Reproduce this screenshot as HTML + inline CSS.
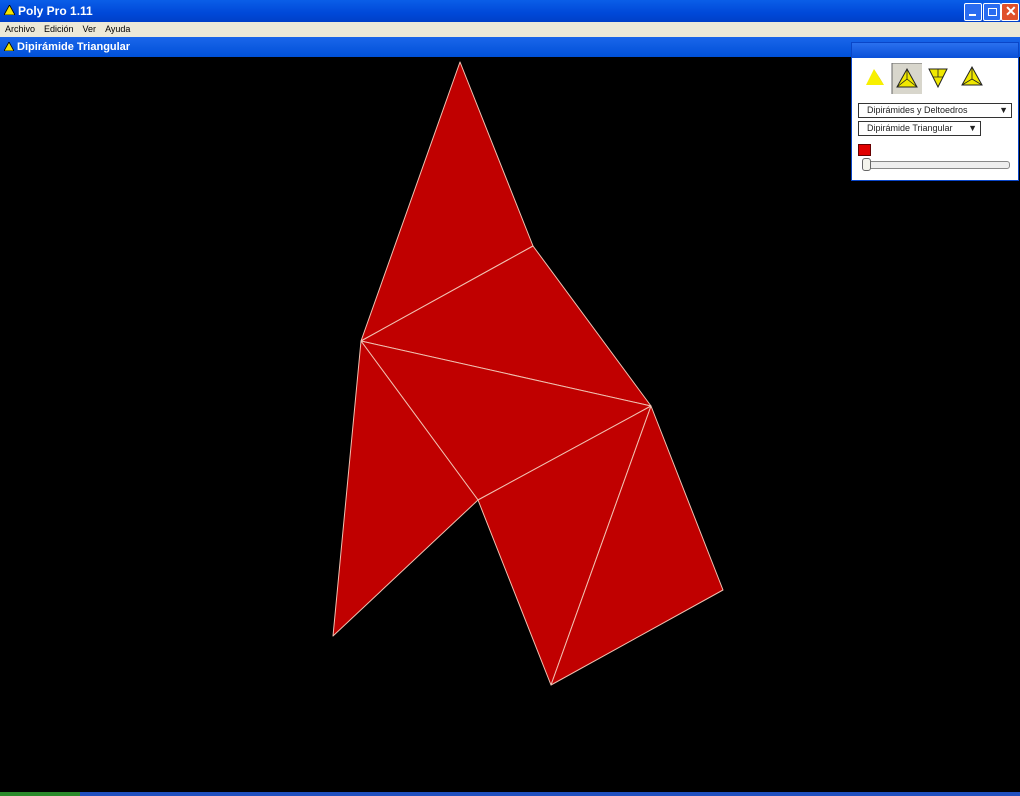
<!DOCTYPE html><html><head><style>
body{margin:0;width:1020px;height:796px;overflow:hidden;background:#000;font-family:"Liberation Sans",sans-serif;position:relative}
.tb{position:absolute;left:0;top:0;width:1020px;height:22px;background:linear-gradient(#0a5ee8,#0048d8 60%,#0040c8);color:#fff;font-weight:bold;font-size:12px}
.menu{position:absolute;left:0;top:22px;width:1020px;height:15px;background:#ece9d8;font-size:9px;color:#000}
.menu span{display:inline-block;margin-left:5px;margin-right:4px;line-height:15px}
.tb2{position:absolute;left:0;top:37px;width:1020px;height:20px;background:linear-gradient(#1a66ea,#0050d8);color:#fff;font-weight:bold;font-size:11px}
.btn{position:absolute;top:3px;width:16px;height:16px;border:1px solid #fff;border-radius:2px;background:#2a6cf0}
.panel{position:absolute;left:851px;top:42px;width:166px;height:137px;background:linear-gradient(#2a70ee,#0a50d8) top/100% 15px no-repeat,#fff;border:1px solid #0a46c8}
.sel{position:absolute;background:#fff;border:1px solid #333;font-size:9px;color:#222;line-height:13px;padding-left:8px;box-sizing:border-box}
</style></head><body>
<div class="tb"><svg style="position:absolute;left:4px;top:5px" width="11" height="10"><polygon points="5.5,0 11,10 0,10" fill="#f4e400" stroke="#000" stroke-width=".8"/></svg><span style="position:absolute;left:18px;top:4px">Poly Pro 1.11</span>
<div class="btn" style="left:964px"><div style="position:absolute;left:4px;top:10px;width:7px;height:2px;background:#fff"></div></div>
<div class="btn" style="left:983px"><div style="position:absolute;left:4px;top:4px;width:7px;height:6px;border:1px solid #fff"></div></div>
<div class="btn" style="left:1001px;background:#e0502a"><span style="position:absolute;left:3px;top:-1px;font-size:14px">✕</span></div></div>
<div class="menu"><span>Archivo</span><span>Edición</span><span>Ver</span><span>Ayuda</span></div>
<div class="tb2"><svg style="position:absolute;left:4px;top:5px" width="10" height="9"><polygon points="5,0 10,9 0,9" fill="#f4e400" stroke="#000" stroke-width=".8"/></svg><span style="position:absolute;left:17px;top:4px">Dipirámide Triangular</span></div>
<svg style="position:absolute;left:0;top:0" width="1020" height="796">
<g fill="#c00000" stroke="#f0c0b0" stroke-width="1" stroke-linejoin="round">
<polygon points="460,62 533,246 361,341"/>
<polygon points="361,341 533,246 651,406"/>
<polygon points="361,341 651,406 478,500"/>
<polygon points="361,341 478,500 333,636"/>
<polygon points="478,500 651,406 551,685"/>
<polygon points="651,406 723,590 551,685"/>
</g>
<rect x="0" y="792" width="80" height="4" fill="#2a8a2a"/><rect x="80" y="792" width="940" height="4" fill="#2050c0"/>
</svg>
<div class="panel">
<svg style="position:absolute;left:8px;top:20px" width="150" height="32">
<rect x="32" y="0" width="30" height="31" fill="#d8d6cc"/><path d="M32,31V0H62" stroke="#666" fill="none"/>
<polygon points="14,6 24,22 6,22" fill="#f8f000"/><polygon points="14,6 24,22 20,16" fill="#a8a000"/>
<polygon points="47,6 57,24 37,24" fill="#f0e800" stroke="#222"/><path d="M47,6L47,16 37,24M47,16 57,24" stroke="#222" fill="none" stroke-width=".8"/>
<polygon points="69,6 87,6 78,24" fill="#f0e800" stroke="#222"/><path d="M73,14h10M78,6v8" stroke="#222" stroke-width=".8"/>
<polygon points="112,4 122,22 102,22" fill="#f0e800" stroke="#222"/><path d="M112,4v12L102,22M112,16l10,6" stroke="#222" stroke-width=".8" fill="none"/>
</svg>
<div class="sel" style="left:6px;top:60px;width:154px;height:15px">Dipirámides y Deltoedros<span style="position:absolute;right:3px">▼</span></div>
<div class="sel" style="left:6px;top:78px;width:123px;height:15px">Dipirámide Triangular<span style="position:absolute;right:3px">▼</span></div>
<div style="position:absolute;left:6px;top:101px;width:11px;height:10px;background:#e00000;border:1px solid #600"></div>
<div style="position:absolute;left:10px;top:118px;width:146px;height:6px;border:1px solid #888;border-radius:3px;background:#eee"></div>
<div style="position:absolute;left:10px;top:115px;width:7px;height:11px;border:1px solid #666;border-radius:3px;background:#f4f4ec"></div>
</div>
</body></html>
